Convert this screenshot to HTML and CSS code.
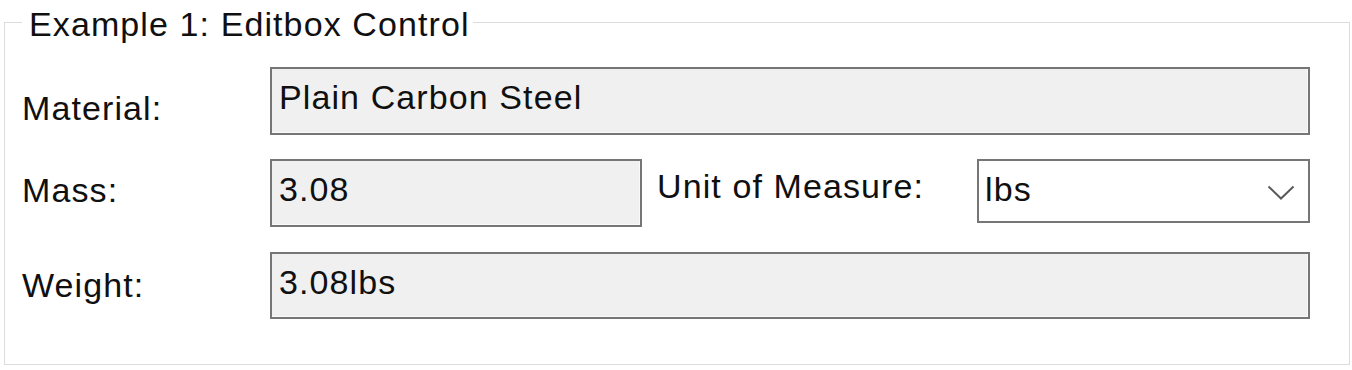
FILE: index.html
```html
<!DOCTYPE html>
<html lang="en">
<head>
<meta charset="utf-8">
<title>Example 1: Editbox Control</title>
<link rel="stylesheet" href="styles.css">
</head>
<body>
<fieldset class="group">
  <legend class="group-title">Example 1: Editbox Control</legend>
  <div class="row row-material">
    <div class="label label-material">Material:</div>
    <div class="edit edit-wide">Plain Carbon Steel</div>
  </div>
  <div class="row row-mass">
    <div class="label label-mass">Mass:</div>
    <div class="edit edit-mass">3.08</div>
    <div class="label label-unit">Unit of Measure:</div>
    <div class="combo">
      <span class="combo-text">lbs</span>
      <svg class="chevron" width="28" height="16" viewBox="0 0 28 16" aria-hidden="true">
        <polyline points="1.5,1.5 14,13.5 26.5,1.5" fill="none" stroke="#5a5a5a" stroke-width="2"/>
      </svg>
    </div>
  </div>
  <div class="row row-weight">
    <div class="label label-weight">Weight:</div>
    <div class="edit edit-wide">3.08lbs</div>
  </div>
</fieldset>
</body>
</html>
```
FILE: styles.css
```css
html, body {
  margin: 0;
  padding: 0;
  background: #ffffff;
}

body {
  font-family: "Liberation Sans", Arial, sans-serif;
  font-size: 34px;
  line-height: 38px;
  letter-spacing: 1.1px;
  color: #101010;
}

.group {
  box-sizing: border-box;
  margin: 2px 2px 0 4px;
  height: 363px;
  padding: 24px 39px 0 17px;
  border: 1px solid #dcdcdc;
  min-width: 0;
}

.group-title {
  padding: 3px 3px 0 7px;
  line-height: 38px;
  color: #101010;
}

.row {
  display: flex;
  align-items: flex-start;
}

.row-material {
  height: 68px;
}

.row-mass {
  height: 68px;
  margin-top: 24px;
}

.row-weight {
  height: 67px;
  margin-top: 25px;
}

.label {
  flex: none;
  width: 248px;
  white-space: nowrap;
}

.label-material {
  margin-top: 22px;
}

.label-mass {
  margin-top: 12px;
}

.label-weight {
  margin-top: 14px;
}

.label-unit {
  width: 320px;
  margin-left: 15px;
  margin-top: 8px;
}

.edit {
  box-sizing: border-box;
  height: 100%;
  padding: 9px 7px 0;
  border: 2px solid #767676;
  background: #f0f0f0;
  white-space: nowrap;
  box-shadow: inset -1px -1px 0 #fafafa;
}

.edit-wide {
  flex: 1;
}

.edit-mass {
  flex: none;
  width: 372px;
}

.combo {
  box-sizing: border-box;
  flex: 1;
  height: 64px;
  display: flex;
  align-items: flex-start;
  justify-content: space-between;
  padding: 9px 13px 0 6px;
  border: 2px solid #767676;
  background: #ffffff;
}

.combo-text {
  white-space: nowrap;
}

.chevron {
  flex: none;
  margin-top: 15px;
}
```
